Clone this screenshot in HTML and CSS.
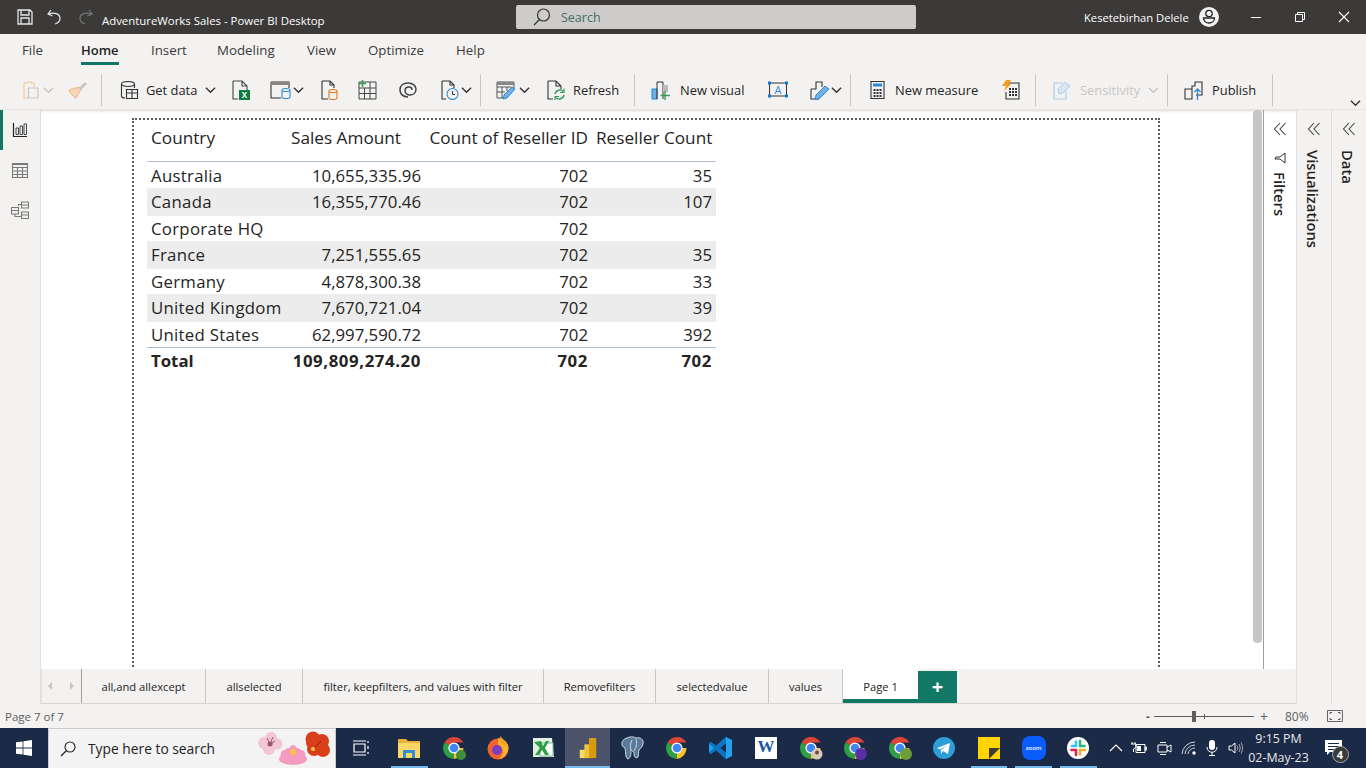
FILE: index.html
```html
<!DOCTYPE html>
<html lang="en">
<head>
<meta charset="utf-8">
<title>AdventureWorks Sales - Power BI Desktop</title>
<link rel="stylesheet" href="styles.css">
</head>
<body>
<svg class="defs" width="0" height="0">
  <symbol id="chev" viewBox="0 0 12 8"><path d="M1 1.500 6 6.500 11 1.500" fill="none" stroke="currentColor" stroke-width="1.400"/></symbol>
  <symbol id="dbl" viewBox="0 0 14 14"><path d="M7 1 1.500 7 7 13M12.500 1 7 7 12.500 13" fill="none" stroke="currentColor" stroke-width="1.100"/></symbol>
  <symbol id="chrome" viewBox="0 0 24 24">
    <path d="M12 12 2.500 6.500A11 11 0 0 1 21.500 6.500H12Z" fill="#db4437"/>
    <path d="M12 12H21.500A11 11 0 0 1 12 23L12 12Z" fill="#fbc02d"/>
    <path d="M12 12V23A11 11 0 0 1 2.500 6.500L12 12Z" fill="#2f9e44"/>
    <circle cx="12" cy="12" r="5.600" fill="#fff"/><circle cx="12" cy="12" r="4.300" fill="#4285f4"/>
  </symbol>
</svg>

<header class="titlebar">
  <div class="qat">
    <svg class="ic20" viewBox="0 0 20 20"><path d="M3 3H15L17 5V17H3Z M6 3V8H14V3 M6 17V11H14V17" fill="none" stroke="#e6e6e6" stroke-width="1.300"/></svg>
    <svg class="ic20" viewBox="0 0 20 20"><path d="M6 3 3 7 7.500 9M3.500 7C9 5 15 6.500 15 11.500 15 14 13 16 10 17" fill="none" stroke="#e6e6e6" stroke-width="1.200"/></svg>
    <svg class="ic20" viewBox="0 0 20 20"><path d="M14 3 17 7 12.500 9M16.500 7C11 5 5 6.500 5 11.500 5 14 7 16 10 17" fill="none" stroke="#777" stroke-width="1.200"/></svg>
    <span class="doc-title">AdventureWorks Sales - Power BI Desktop</span>
  </div>
  <div class="searchbox">
    <svg class="ic20" viewBox="0 0 20 20"><circle cx="11.500" cy="8" r="6" fill="none" stroke="#333" stroke-width="1.200"/><path d="M7.500 12.500 2 18" stroke="#333" stroke-width="1.300"/></svg>
    <span>Search</span>
  </div>
  <div class="user">
    <span>Kesetebirhan Delele</span>
    <svg class="avatar" viewBox="0 0 20 20"><circle cx="10" cy="10" r="10" fill="#f3f2f1"/><circle cx="10" cy="6.500" r="3.200" fill="none" stroke="#222" stroke-width="1.300"/><path d="M4.500 11H15.500C15.500 14 13 16 10 16S4.500 14 4.500 11Z" fill="none" stroke="#222" stroke-width="1.300"/></svg>
  </div>
  <div class="winctl">
    <svg class="ic12" viewBox="0 0 12 12"><path d="M1 6.500H11" stroke="#fff"/></svg>
    <svg class="ic12" viewBox="0 0 12 12"><path d="M1.500 3.500H8.500V10.500H1.500ZM3.500 3.500V1.500H10.500V8.500H8.500" fill="none" stroke="#fff"/></svg>
    <svg class="ic12" viewBox="0 0 12 12"><path d="M1 1 11 11M11 1 1 11" stroke="#fff" stroke-width="1.100"/></svg>
  </div>
</header>

<nav class="menutabs">
  <span class="mt mt-file">File</span>
  <span class="mt mt-home active">Home</span>
  <span class="mt mt-insert">Insert</span>
  <span class="mt mt-model">Modeling</span>
  <span class="mt mt-view">View</span>
  <span class="mt mt-opt">Optimize</span>
  <span class="mt">Help</span>
</nav>

<section class="ribbon">
  <svg class="ic20" viewBox="0 0 20 20"><path d="M3 3H6V2H10V3H13V7M3 3V18H7" fill="none" stroke="#f3c9a0" stroke-width="1.200"/><path d="M7.500 8H17V18H7.500Z" fill="#f3f2f1" stroke="#c8c6c4" stroke-width="1.200"/></svg>
  <svg class="chev dis" viewBox="0 0 12 8"><use href="#chev"/></svg>
  <svg class="ic20" viewBox="0 0 20 20"><path d="M11 7 1 10C2 13 5 17 8 18 10 15 12 11 13 10Z" fill="#f6d7b5" stroke="#e8b98a"/><path d="M11 8 17 2 19 4 13 10Z" fill="#c8c6c4"/></svg>
  <i class="sep"></i>
  <svg class="ic20" viewBox="0 0 20 20"><ellipse cx="9" cy="4" rx="6.500" ry="2.500" fill="none" stroke="#333" stroke-width="1.100"/><path d="M2.500 4V16C2.500 17 4 18 6 18M15.500 4V8" fill="none" stroke="#333" stroke-width="1.100"/><path d="M7.500 9.500H18.500V18.500H7.500ZM7.500 13H18.500M13 9.500V18.500" fill="#f3f2f1" stroke="#333" stroke-width="1.100"/></svg>
  <span class="rt">Get data</span>
  <svg class="chev" viewBox="0 0 12 8"><use href="#chev"/></svg>
  <svg class="ic20" viewBox="0 0 20 20"><path d="M2 1H11L16 6V10M2 1V19H7M11 1V6H16" fill="none" stroke="#444" stroke-width="1.100"/><rect x="8" y="10" width="11" height="10" fill="#107c41"/><text x="13.500" y="18" class="xl">X</text></svg>
  <svg class="ic22" viewBox="0 0 22 20"><path d="M1 2H19V8M1 2V18H11" fill="none" stroke="#333" stroke-width="1.100"/><rect x="1" y="2" width="18" height="3" fill="#8a8886"/><path d="M12 10C12 8 20 8 20 10V17C20 19 12 19 12 17Z M12 10C12 12 20 12 20 10" fill="#f3f2f1" stroke="#2b88d8" stroke-width="1.100"/></svg>
  <svg class="chev" viewBox="0 0 12 8"><use href="#chev"/></svg>
  <svg class="ic20" viewBox="0 0 20 20"><path d="M2 1H10L14 5V8M2 1V19H8M10 1V5H14" fill="none" stroke="#333" stroke-width="1.100"/><path d="M9 11C9 9 17 9 17 11V18C17 20 9 20 9 18Z M9 11C9 13 17 13 17 11" fill="#f3f2f1" stroke="#d97a1d" stroke-width="1.100"/></svg>
  <svg class="ic20" viewBox="0 0 20 20"><path d="M2 2H19V19H2ZM2 8H19M2 13.500H19M7.500 8V19M13 8V19M13 2V8" fill="none" stroke="#444"/><path d="M5.500 0V7M2 3.500H9" stroke="#3a9d5d" stroke-width="1.600"/></svg>
  <svg class="ic20" viewBox="0 0 20 20"><path d="M10 17C4 17 2 13 2 10 2 5 6 3 10 3 15 3 18 6 18 9 18 13 15 15 12 15 9 15 7 13 7 10.500 7 8 9 7 11 7 13 7 14 8.500 14 10" fill="none" stroke="#444" stroke-width="1.500"/></svg>
  <svg class="ic20" viewBox="0 0 20 20"><path d="M3 1H11L15 5V8M3 1V19H7M11 1V5H15" fill="none" stroke="#333" stroke-width="1.100"/><circle cx="13.500" cy="14" r="5.500" fill="#f3f2f1" stroke="#2b88d8" stroke-width="1.100"/><path d="M13.500 11V14.500H16" fill="none" stroke="#333"/></svg>
  <svg class="chev" viewBox="0 0 12 8"><use href="#chev"/></svg>
  <i class="sep"></i>
  <svg class="ic20" viewBox="0 0 20 20"><path d="M1 2H18V8M1 2V18H7M1 7H15M1 12H9M6 7V18M11 7V11" fill="none" stroke="#555"/><rect x="1" y="2" width="17" height="3" fill="#8a8886"/><path d="M7 19 8 15 16 7 19 9 11 18Z" fill="#71afe5" stroke="#2b88d8"/></svg>
  <svg class="chev" viewBox="0 0 12 8"><use href="#chev"/></svg>
  <svg class="ic20" viewBox="0 0 20 20"><path d="M2 1H10L15 6V9M2 1V19H7M10 1V6H15" fill="none" stroke="#333" stroke-width="1.100"/><path d="M9 14A5 5 0 0 1 17.500 11.500M18 15A5 5 0 0 1 9.500 17.500" fill="none" stroke="#3a9d5d" stroke-width="1.500"/><path d="M18 8.500V12.500H14M9 20V16.500H13" fill="none" stroke="#3a9d5d" stroke-width="1.200"/></svg>
  <span class="rt">Refresh</span>
  <i class="sep"></i>
  <svg class="ic20" viewBox="0 0 20 20"><rect x="1" y="9" width="5" height="10" fill="#71afe5" stroke="#2b88d8"/><path d="M6 19V2H12V19" fill="none" stroke="#333"/><rect x="12" y="5" width="5" height="7" fill="#bbb"/><path d="M14 11V20M9.500 15.500H19" stroke="#3a9d5d" stroke-width="1.400"/></svg>
  <span class="rt">New visual</span>
  <svg class="ic20" viewBox="0 0 20 20"><path d="M1.500 3H18.500V16H1.500Z" fill="none" stroke="#333"/><path d="M0 1.500H3V4.500H0ZM17 1.500H20V4.500H17ZM0 14.500H3V17.500H0ZM17 14.500H20V17.500H17Z" fill="#0f78d4"/><text x="10" y="14" class="tb">A</text></svg>
  <svg class="ic20" viewBox="0 0 20 20"><path d="M1 9H6V2H12V7M1 9V19H9" fill="none" stroke="#333" stroke-width="1.100"/><path d="M5 20 6 15 15 6 19 9 10 18Z" fill="#71afe5" stroke="#2b88d8"/></svg>
  <svg class="chev" viewBox="0 0 12 8"><use href="#chev"/></svg>
  <i class="sep"></i>
  <svg class="ic20" viewBox="0 0 20 20"><path d="M3 1.500H16V18.500H3Z" fill="none" stroke="#333" stroke-width="1.100"/><rect x="5" y="3.500" width="9" height="3" fill="#2b88d8"/><path d="M5.500 9H7.500V11H5.500ZM8.500 9H10.500V11H8.500ZM11.500 9H13.500V11H11.500ZM5.500 12H7.500V14H5.500ZM8.500 12H10.500V14H8.500ZM11.500 12H13.500V14H11.500ZM5.500 15H7.500V17H5.500ZM8.500 15H10.500V17H8.500ZM11.500 15H13.500V17H11.500Z" fill="#333"/></svg>
  <span class="rt">New measure</span>
  <svg class="ic20" viewBox="0 0 20 20"><path d="M7 3H18V19H5V12" fill="none" stroke="#333" stroke-width="1.100"/><path d="M8 8H10V10H8ZM11 8H13V10H11ZM14 8H16V10H14ZM8 11H10V13H8ZM11 11H13V13H11ZM14 11H16V13H14ZM8 14H10V16H8ZM11 14H13V16H11ZM14 14H16V16H14Z" fill="#333"/><path d="M5 0H10L7.500 4H10L3 11 5 6H1Z" fill="#f29b1d"/></svg>
  <i class="sep"></i>
  <svg class="ic20" viewBox="0 0 20 20"><path d="M2 3H10M2 3V19H14V11" fill="none" stroke="#a9cfe8" stroke-width="1.200"/><path d="M6 9 13 2 18 6 11 13 7 14Z" fill="#d7e6f1" stroke="#a9cfe8"/></svg>
  <span class="rt dis">Sensitivity</span>
  <svg class="chev dis" viewBox="0 0 12 8"><use href="#chev"/></svg>
  <i class="sep"></i>
  <svg class="ic20" viewBox="0 0 20 20"><path d="M1 9H8V19H1ZM8 9V6H11V2H18V15H12" fill="none" stroke="#333" stroke-width="1.100"/><path d="M13.500 20V9M10.500 12 13.500 9 16.500 12" fill="none" stroke="#2b88d8" stroke-width="1.300"/></svg>
  <span class="rt">Publish</span>
  <i class="sep"></i>
  <svg class="chev collapse" viewBox="0 0 12 8"><use href="#chev"/></svg>
</section>

<main class="workspace">
  <aside class="sidenav">
    <div class="navitem current"><svg class="ic16" viewBox="0 0 16 16"><path d="M1.500 1V14.500H15" fill="none" stroke="#222" stroke-width="1.200"/><path d="M4 6H6.500V12.500H4ZM8 4H10.500V12.500H8ZM12 2H14.500V12.500H12Z" fill="none" stroke="#444"/></svg></div>
    <div class="navitem"><svg class="ic16" viewBox="0 0 16 16"><path d="M.5 1.500H15.500V15.500H.5ZM.5 5.500H15.500M.5 9H15.500M.5 12.500H15.500M5.500 5.500V15.500M10.500 5.500V15.500" fill="none" stroke="#7a7a7a" stroke-width="1.100"/><rect x=".5" y="1.500" width="15" height="1.500" fill="#7a7a7a"/></svg></div>
    <div class="navitem"><svg class="ic18" viewBox="0 0 18 18"><path d="M.5 6.500H7.500V13H.5ZM10.500 1H17.500V7H10.500ZM10.500 11H17.500V17.500H10.500ZM.5 9.500H7.500M10.500 4H17.500M10.500 14H17.500M7.500 5V3.500H10.500M4 13V15.500H10.500" fill="none" stroke="#7a7a7a" stroke-width="1.100"/></svg></div>
  </aside>

  <div class="center">
    <div class="upper">
      <div class="canvas">
        <div class="visual">
          <div class="tbl" role="table">
            <div class="tr head"><span>Country</span><span>Sales Amount</span><span>Count of Reseller ID</span><span>Reseller Count</span></div>
            <div class="tr"><span>Australia</span><span>10,655,335.96</span><span>702</span><span>35</span></div>
            <div class="tr alt"><span>Canada</span><span>16,355,770.46</span><span>702</span><span>107</span></div>
            <div class="tr"><span>Corporate HQ</span><span></span><span>702</span><span></span></div>
            <div class="tr alt"><span>France</span><span>7,251,555.65</span><span>702</span><span>35</span></div>
            <div class="tr"><span>Germany</span><span>4,878,300.38</span><span>702</span><span>33</span></div>
            <div class="tr alt"><span>United Kingdom</span><span>7,670,721.04</span><span>702</span><span>39</span></div>
            <div class="tr"><span>United States</span><span>62,997,590.72</span><span>702</span><span>392</span></div>
            <div class="tr total"><span>Total</span><span>109,809,274.20</span><span>702</span><span>702</span></div>
          </div>
        </div>
        <div class="scrollthumb"></div>
      </div>
      <aside class="pane filters">
        <svg class="dbl" viewBox="0 0 14 14"><use href="#dbl"/></svg>
        <svg class="funnel" viewBox="0 0 12 12"><path d="M1 1H11L7 6V11L5 10V6Z" fill="none" stroke="#333"/></svg>
        <span class="vt">Filters</span>
      </aside>
    </div>
    <div class="pagetabs">
      <div class="pager">
        <svg class="pg" viewBox="0 0 6 10"><path d="M5 1 1 5 5 9Z" fill="#c8c6c4"/></svg>
        <svg class="pg" viewBox="0 0 6 10"><path d="M1 1 5 5 1 9Z" fill="#c8c6c4"/></svg>
      </div>
      <span class="ptab t1">all,and allexcept</span>
      <span class="ptab t2">allselected</span>
      <span class="ptab t3">filter, keepfilters, and values with filter</span>
      <span class="ptab t4">Removefilters</span>
      <span class="ptab t5">selectedvalue</span>
      <span class="ptab t6">values</span>
      <span class="ptab t7 sel">Page 1</span>
      <span class="addtab">+</span>
    </div>
  </div>

  <aside class="pane viz">
    <svg class="dbl" viewBox="0 0 14 14"><use href="#dbl"/></svg>
    <span class="vt">Visualizations</span>
  </aside>
  <aside class="pane data">
    <svg class="dbl" viewBox="0 0 14 14"><use href="#dbl"/></svg>
    <span class="vt">Data</span>
  </aside>
</main>

<footer class="statusbar">
  <span class="pageinfo">Page 7 of 7</span>
  <div class="zoom">
    <span class="zm">-</span>
    <div class="slider"><i class="thumb"></i><i class="tick"></i></div>
    <span class="zp">+</span>
    <span class="pct">80%</span>
    <svg class="fit" viewBox="0 0 16 12"><path d="M.5.5H15.500V11.500H.5Z" fill="none" stroke="#666"/><path d="M3 4V2.500H5M11 2.500H13V4M13 8V9.500H11M5 9.500H3V8" fill="none" stroke="#555"/></svg>
  </div>
</footer>

<div class="taskbar">
  <div class="startbtn"><svg class="ic16" viewBox="0 0 16 16"><path d="M0 2.300 6.600 1.400V7.600H0ZM7.400 1.300 16 0V7.600H7.400ZM0 8.400H6.600V14.600L0 13.700ZM7.400 8.400H16V16L7.400 14.700Z" fill="#fff"/></svg></div>
  <div class="tasksearch">
    <svg class="ic16" viewBox="0 0 16 16"><circle cx="10" cy="6" r="5" fill="none" stroke="#222" stroke-width="1.100"/><path d="M6.500 9.500 1 15" stroke="#222" stroke-width="1.200"/></svg>
    <span>Type here to search</span>
    <svg class="flowers" viewBox="0 0 74 36">
      <g fill="#f2c6d4"><circle cx="7" cy="12" r="6"/><circle cx="14" cy="7" r="6"/><circle cx="20" cy="13" r="5.500"/><circle cx="12" cy="18" r="6"/></g><path d="M13 13 10 7M13 13 16 6M13 13 18 10" stroke="#9a5a6c"/><circle cx="13" cy="13" r="2.500" fill="#9a5a6c"/>
      <g fill="#f59ac0"><ellipse cx="36" cy="28" rx="14" ry="6"/><ellipse cx="27" cy="25" rx="3.500" ry="6"/><ellipse cx="31" cy="24" rx="4" ry="7"/><ellipse cx="36" cy="22" rx="4.500" ry="8"/><ellipse cx="41" cy="24" rx="4" ry="7"/><ellipse cx="45" cy="25" rx="3.500" ry="6"/></g><circle cx="36" cy="21" r="3" fill="#f6c344"/>
      <g fill="#d8401c"><circle cx="56" cy="8" r="7.500"/><circle cx="65" cy="10" r="7"/><circle cx="66" cy="19" r="7"/><circle cx="57" cy="18" r="7"/><circle cx="54" cy="12" r="5"/></g><path d="M58 16 64 10" stroke="#8f1f0a"/><circle cx="56" cy="18" r="2" fill="#f6c344"/>
    </svg>
  </div>
  <div class="tbtn taskview"><svg class="ic18" viewBox="0 0 18 18"><path d="M2 5H13V13H2ZM1 2H14M1 16H14M16 2V4M16 7V10M16 13V15" fill="none" stroke="#fff" stroke-width="1.200"/></svg></div>
  <div class="apps">
    <div class="tbtn open"><svg class="ic22" viewBox="0 0 22 20"><path d="M0 1H8L10 3H22V20H0Z" fill="#e8b23a"/><path d="M0 5H22V20H0Z" fill="#fbd768"/><path d="M5 12H17V20H14V15H8V20H5Z" fill="#2f8fd6"/></svg></div>
    <div class="tbtn"><svg class="ic24" viewBox="0 0 24 24"><use href="#chrome"/><circle cx="19" cy="19" r="5" fill="#3f8f3f"/></svg></div>
    <div class="tbtn"><svg class="ic24" viewBox="0 0 24 24"><circle cx="12" cy="13" r="10.500" fill="#f0632e"/><path d="M12 2C20 3 24 9 22 15 20 20 16 23 12 23 18 20 19 12 12 9Z" fill="#fbb32c"/><path d="M14 0C17 3 20 6 21 11L15 7Z" fill="#f9a01b"/><circle cx="11" cy="14" r="5" fill="#7b3fc4"/></svg></div>
    <div class="tbtn"><svg class="ic22" viewBox="0 0 22 22"><path d="M1 1H20L22 20H1Z" fill="#dff0e0"/><path d="M8 6H21V19H8Z" fill="#fff" stroke="#7ab98e"/><path d="M2 5 9 4 11 9 14 4 17 4 13 11 17 18 13 18 10 13 7 18 3 18 8 11Z" fill="#2f9e44"/></svg></div>
    <div class="tbtn active"><svg class="ic22" viewBox="0 0 22 24"><rect x="2" y="14" width="6" height="9" fill="#f6da6b"/><rect x="7" y="8" width="7" height="15" fill="#f0c33c"/><rect x="12" y="1" width="8" height="22" rx="1" fill="#d99a0e"/></svg></div>
    <div class="tbtn"><svg class="ic24" viewBox="0 0 24 24"><path d="M7 2C12 0 14 1 16 2 20 1 24 3 23 8 22 11 21 12 19 14 18 16 19 19 18 21 15 23 14 21 14 16 13 16 12 15 11 14 11 18 11 22 8 23 5 22 6 16 5 12 1 11 0 4 7 2Z" fill="#5b7a99" stroke="#cfdbe6"/><path d="M12 4C10 8 10 11 11 14M16 3C17 7 17 10 14 15" fill="none" stroke="#cfdbe6"/></svg></div>
    <div class="tbtn"><svg class="ic24" viewBox="0 0 24 24"><use href="#chrome"/></svg></div>
    <div class="tbtn"><svg class="ic24" viewBox="0 0 24 24"><path d="M17 1 23 4V20L17 23 7 14 2 18 0 16.500V7.500L2 6 7 10ZM17 7 11 12 17 17Z" fill="#22a2ee"/><path d="M17 1V7L11 12 17 17V23L7 14 2 18 0 16.500 5 12 0 7.500 2 6 7 10Z" fill="#0a74c4"/></svg></div>
    <div class="tbtn"><div class="wordic"><span>W</span></div></div>
    <div class="tbtn"><svg class="ic24" viewBox="0 0 24 24"><use href="#chrome"/><circle cx="18" cy="18" r="5.500" fill="#d9c9bb"/><circle cx="18" cy="16.500" r="2" fill="#6b4a3a"/></svg></div>
    <div class="tbtn"><svg class="ic24" viewBox="0 0 24 24"><use href="#chrome"/><circle cx="18" cy="18" r="6" fill="#5a2ea6"/></svg></div>
    <div class="tbtn"><svg class="ic24" viewBox="0 0 24 24"><use href="#chrome"/><circle cx="18" cy="18" r="6" fill="#6a9f3a"/></svg></div>
    <div class="tbtn"><svg class="ic22" viewBox="0 0 22 22"><circle cx="11" cy="11" r="11" fill="#2c9fd9"/><path d="M4 11 17 6 15 17 10 14 8 17 8 13 14 8.500 7 12.500Z" fill="#fff"/></svg></div>
    <div class="tbtn open"><svg class="ic22" viewBox="0 0 22 22"><rect width="22" height="22" fill="#ffd400"/><path d="M11 22V11H22Z" fill="#3c3c32"/></svg></div>
    <div class="tbtn open"><div class="zoomic"><span>zoom</span></div></div>
    <div class="tbtn open"><svg class="ic22" viewBox="0 0 22 22"><circle cx="11" cy="11" r="11" fill="#fff"/><path d="M9 4.500V9H5" fill="none" stroke="#36c5f0" stroke-width="2.600" stroke-linecap="round"/><path d="M13 4V9" stroke="#2eb67d" stroke-width="2.600" stroke-linecap="round"/><path d="M13.500 9H17.500" stroke="#2eb67d" stroke-width="2.600" stroke-linecap="round"/><path d="M13 13H18" stroke="#ecb22e" stroke-width="2.600" stroke-linecap="round"/><path d="M13 13V17.500" stroke="#ecb22e" stroke-width="2.600" stroke-linecap="round"/><path d="M9 13V18M4.500 13H9" stroke="#e01e5a" stroke-width="2.600" stroke-linecap="round"/></svg></div>
  </div>
  <div class="tray">
    <svg class="ic14 t-up" viewBox="0 0 14 14"><path d="M1 10 7 4 13 10" fill="none" stroke="#fff" stroke-width="1.200"/></svg>
    <svg class="ic16 t-bat" viewBox="0 0 16 14"><path d="M5 3.500H14V11.500H5ZM14 6H15.500V9H14Z" fill="none" stroke="#fff"/><path d="M6 5H10V10H6Z" fill="#fff"/><path d="M1 3V1M4 3V1M0 3H5V6C5 7 3 7.500 2.500 8V11" fill="none" stroke="#fff"/></svg>
    <svg class="ic16 t-cam" viewBox="0 0 16 16"><path d="M2 5H11V12H2ZM11 7 15 5V12L11 10" fill="none" stroke="#fff"/><path d="M4 2.500H10M4 14.500H10" stroke="#fff"/></svg>
    <svg class="ic16 t-wifi" viewBox="0 0 16 16"><path d="M1 14A13 13 0 0 1 14 2M4 14A10 10 0 0 1 14 5M7 14A7 7 0 0 1 14 8" fill="none" stroke="#cfd3da"/><circle cx="13" cy="13" r="1.700" fill="#fff"/></svg>
    <svg class="ic16 t-mic" viewBox="0 0 16 18"><rect x="5" y="1" width="6" height="10" rx="3" fill="#fff"/><path d="M3 8C3 15 13 15 13 8M8 13V16M5 16.500H11" fill="none" stroke="#fff"/></svg>
    <svg class="ic16 t-vol" viewBox="0 0 16 16"><path d="M1 6H3.500L7 3V13L3.500 10H1Z" fill="none" stroke="#fff"/><path d="M9 5.500C10 7 10 9 9 10.500M11 4C12.500 6.500 12.500 9.500 11 12M13 2.500C15 6 15 10 13 13.500" fill="none" stroke="#aab"/></svg>
    <div class="clock"><span>9:15 PM</span><span>02-May-23</span></div>
    <div class="notif">
      <svg class="ic18" viewBox="0 0 18 16"><path d="M0 0H17V12H5L2 15V12H0Z" fill="#fff"/><path d="M3 3.500H14M3 6.500H14M3 9.500H10" stroke="#1b2a47"/></svg>
      <span class="badge">4</span>
    </div>
  </div>
</div>
</body>
</html>
```

FILE: styles.css
```css
* { box-sizing: border-box; }
html, body { margin: 0; padding: 0; }
body {
  width: 1366px;
  height: 768px;
  overflow: hidden;
  display: flex;
  flex-direction: column;
  background: #f3f2f1;
  color: #252423;
  font-family: "Open Sans", "Noto Sans", sans-serif;
}
svg { display: block; flex: none; }
.defs { position: absolute; }
.ic12 { width: 12px; height: 12px; }
.ic14 { width: 14px; height: 14px; }
.ic16 { width: 16px; height: 16px; }
.ic18 { width: 18px; height: 18px; }
.ic20 { width: 20px; height: 20px; }
.ic22 { width: 22px; height: 22px; }
.ic24 { width: 24px; height: 24px; }

/* title bar */
.titlebar {
  height: 34px;
  background: #3b3a39;
  display: grid;
  grid-template-columns: 516px 400px 334px 1fr;
  align-items: center;
  color: #fff;
}
.qat { display: flex; align-items: center; padding-left: 15px; gap: 10px; }
.doc-title { font-size: 11.400px; margin-left: -3px; white-space: nowrap; padding-top: 7px; }
.searchbox {
  height: 24px;
  background: #cdccca;
  border-radius: 2px;
  display: flex;
  align-items: center;
  padding-left: 16px;
  gap: 9px;
  font-size: 12.500px;
  color: #3f6d68;
}
.user { display: flex; align-items: center; font-size: 11.200px; padding-left: 168px; }
.user span { width: 105px; white-space: nowrap; }
.avatar { width: 20px; height: 20px; margin-left: 10px; }
.winctl { display: flex; align-items: center; gap: 32px; }

/* menu tabs */
.menutabs {
  height: 34px;
  display: flex;
  align-items: flex-start;
  padding: 7px 0 0 22px;
  font-size: 13.300px;
  color: #3b3a39;
}
.mt { height: 25px; line-height: 18px; white-space: nowrap; }
.mt-file { width: 59px; }
.mt-home { width: 70px; }
.mt-insert { width: 66px; }
.mt-model { width: 90px; }
.mt-view { width: 61px; }
.mt-opt { width: 88px; }
.mt.active { color: #252423; font-weight: 600; position: relative; font-size: 13px; }
.mt.active::after {
  content: "";
  position: absolute;
  left: 0;
  width: 38px;
  top: 21px;
  height: 3px;
  background: #117865;
}

/* ribbon */
.ribbon {
  height: 42px;
  padding: 3px 0 0 21px;
  display: grid;
  grid-template-columns:
    22px 25px 33px 18px 27px 59px 26px 39px 23px 27px 37px 41px 41px 22px 19px
    16px 23px 27px 27px 61px 17px 29px 88px 42px 21px 19px 18px 27px 106px 34px
    17px 28px 68px 19px 17px 28px 60px 78px 1fr;
  align-items: center;
  font-size: 12.900px;
  border-bottom: 1px solid #e6e4e2;
}
.sep { display: block; width: 1px; height: 32px; background: #c8c6c4; }
.chev { width: 11px; height: 8px; color: #323130; }
.chev.dis { color: #c8c6c4; }
.chev.collapse { align-self: end; margin-bottom: 2px; }
.rt { white-space: nowrap; color: #252423; }
.rt.dis { color: #c8c6c4; }
.xl { font: 700 8px "Open Sans", sans-serif; fill: #fff; text-anchor: middle; }
.tb { font: 11px "Open Sans", sans-serif; fill: #2b88d8; text-anchor: middle; }

/* workspace */
.workspace { flex: 1; min-height: 0; display: flex; }
.sidenav { width: 41px; border-right: 1px solid #e1dfdd; }
.navitem { height: 40px; display: flex; align-items: center; justify-content: center; padding-right: 1px; }
.navitem.current { box-shadow: inset 3px 0 0 #117865; }
.center { width: 1255px; display: flex; flex-direction: column; }
.upper { flex: 1; min-height: 0; display: flex; }
.canvas {
  width: 1223px;
  background: #fff;
  border-right: 1px solid #a19f9d;
  position: relative;
  padding: 8px 0 0 91px;
  box-shadow: inset 0 4px 3px -3px #dcdad8;
  overflow: hidden;
}
.visual {
  width: 1028px;
  height: 600px;
  border: 2px dotted #605e5c;
  padding: 1px 0 0 13px;
}
.scrollthumb {
  position: absolute;
  right: 1px;
  top: 0;
  width: 9px;
  height: 533px;
  background: #c8c6c4;
  border-radius: 4px;
}

/* table */
.tbl { width: 569px; font-size: 16.800px; color: #252423; }
.tr {
  display: grid;
  grid-template-columns: 140px 138px 167px 124px;
  height: 26.500px;
  align-items: center;
  border-bottom: 1px solid #eeeeee;
  white-space: nowrap;
}
.tr span { padding: 0 4px; text-align: right; }
.tr span:first-child { text-align: left; letter-spacing: .28px; }
.tr.alt { background: #ececec; }
.tr.head {
  height: 41px;
  margin-bottom: .5px;
  font-size: 17.200px;
  border-bottom: 1px solid #b3b9d8;
  padding-bottom: 8px;
}
.tr.head span:first-child { letter-spacing: 0; }
.tr.head span:nth-child(2) { text-align: left; }
.tr.total {
  font-weight: 700;
  border-bottom: 0;
  border-top: 1px solid #a8bce0;
  margin-top: -1px;
  letter-spacing: .6px;
}
.tr.total span:first-child { letter-spacing: 0; }

/* right panes */
.pane { display: flex; flex-direction: column; align-items: center; padding-top: 12px; }
.filters { width: 32px; background: #fff; box-shadow: inset 0 4px 3px -3px #dcdad8; }
.viz { width: 36px; border-left: 1px solid #e1dfdd; border-right: 1px solid #e1dfdd; }
.data { width: 34px; }
.dbl { width: 14px; height: 14px; color: #444; }
.funnel { width: 12px; height: 12px; transform: rotate(90deg); margin-top: 16px; }
.vt {
  writing-mode: vertical-rl;
  font-size: 14.800px;
  font-weight: 600;
  color: #252423;
  margin-top: 14px;
  white-space: nowrap;
}
.filters .vt { margin-top: 8px; }
.viz .vt { margin-right: 2px; }
.data .vt { margin-right: 3px; }

/* page tabs */
.pagetabs {
  height: 35px;
  flex: none;
  display: flex;
  align-items: stretch;
  font-size: 11.200px;
  color: #252423;
  border-left: 1px solid #e1dfdd;
  border-bottom: 1px solid #d8d6d4;
  position: relative;
}
.pager {
  width: 40px;
  display: flex;
  align-items: center;
  gap: 16px;
  padding-left: 5px;
  border-right: 1px solid #a19f9d;
}
.pg { width: 6px; height: 10px; }
.ptab {
  display: flex;
  align-items: center;
  justify-content: center;
  border-right: 1px solid #c8c6c4;
  white-space: nowrap;
}
.t1 { width: 124px; }
.t2 { width: 97px; }
.t3 { width: 241px; }
.t4 { width: 112px; }
.t5 { width: 113px; }
.t6 { width: 74px; }
.t7 { width: 75px; }
.ptab.sel { background: #fff; border-right: 0; border-bottom: 4px solid #117865; padding-top: 4px; color: #252423; }
.addtab {
  width: 39px;
  height: 32px;
  margin-top: 2px;
  background: #117865;
  color: #fff;
  font-size: 20px;
  font-weight: 700;
  line-height: 31px;
  text-align: center;
}

/* status bar */
.statusbar {
  height: 24px;
  display: flex;
  align-items: center;
  justify-content: space-between;
  font-size: 11.500px;
  color: #605e5c;
  padding-left: 5px;
}
.zoom { display: flex; align-items: center; }
.zm { width: 8px; font-weight: 700; }
.slider { width: 100px; height: 1px; background: #605e5c; position: relative; }
.thumb { position: absolute; left: 38px; top: -5px; width: 4px; height: 11px; background: #605e5c; }
.tick { position: absolute; left: 50px; top: -2px; width: 1px; height: 5px; background: #605e5c; }
.zp { width: 31px; padding-left: 6px; font-size: 14px; }
.pct { width: 42px; font-size: 12px; }
.fit { width: 16px; height: 12px; margin-right: 23px; }

/* taskbar */
.taskbar {
  height: 40px;
  background: #1b2a47;
  display: flex;
  align-items: stretch;
  color: #fff;
}
.startbtn { width: 48px; display: flex; align-items: center; justify-content: center; }
.tasksearch {
  width: 288px;
  background: #f3f3f3;
  border: 1px solid #c9c9c9;
  border-bottom: 0;
  display: flex;
  align-items: center;
  padding-left: 11px;
  color: #222;
  font-size: 13.800px;
  position: relative;
}
.tasksearch span { margin-left: 12px; white-space: nowrap; }
.flowers { width: 74px; height: 36px; margin-left: 42px; }
.tbtn {
  width: 44.600px;
  display: flex;
  align-items: center;
  justify-content: center;
  position: relative;
}
.taskview { width: 51px; padding-right: 2px; }
.apps { display: flex; }
.tbtn.open::after {
  content: "";
  position: absolute;
  left: 4px;
  right: 4px;
  bottom: 0;
  height: 2px;
  background: #76b9ed;
}
.tbtn.active { background: #4a5369; }
.tbtn.active::after {
  content: "";
  position: absolute;
  left: 0;
  right: 0;
  bottom: 0;
  height: 2px;
  background: #76b9ed;
}
.wordic {
  width: 22px;
  height: 22px;
  background: #fff;
  color: #1a56a8;
  font: 700 17px "Liberation Serif", serif;
  line-height: 20px;
  text-align: center;
}
.zoomic {
  width: 24px;
  height: 24px;
  border-radius: 8px;
  background: #0b5cff;
  color: #fff;
  font-size: 6px;
  font-weight: 600;
  line-height: 24px;
  text-align: center;
}
.tray { flex: 1; display: flex; align-items: center; position: relative; }
.t-up { margin-left: 8px; }
.t-bat { margin-left: 8px; }
.t-cam { margin-left: 9px; }
.t-wifi { margin-left: 9px; }
.t-mic { margin-left: 7px; height: 18px; }
.t-vol { margin-left: 8px; }
.clock {
  width: 70px;
  display: flex;
  flex-direction: column;
  align-items: center;
  font-size: 12.400px;
  line-height: 19px;
  color: #e8e8e8;
}
.notif { margin-left: 11px; position: relative; }
.badge {
  position: absolute;
  left: 7px;
  top: 7px;
  width: 17px;
  height: 17px;
  border-radius: 50%;
  background: #3a3a3a;
  border: 1px solid #aaa;
  font-size: 11px;
  font-weight: 700;
  line-height: 15px;
  text-align: center;
}
```
